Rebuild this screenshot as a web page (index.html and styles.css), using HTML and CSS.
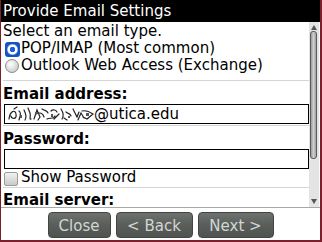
FILE: index.html
```html
<!DOCTYPE html>
<html>
<head>
<meta charset="utf-8">
<link rel="stylesheet" href="styles.css">
</head>
<body>
<div class="frame">
  <div class="title">Provide Email Settings</div>
  <div class="middle">
    <div class="content">
      <div class="section first">
        <div class="line">Select an email type.</div>
        <div class="option"><span class="radio on"></span>POP/IMAP (Most common)</div>
        <div class="option"><span class="radio"></span>Outlook Web Access (Exchange)</div>
      </div>
      <div class="section">
        <div class="label">Email address:</div>
        <div class="field">
          <svg class="scribble" width="87" height="16" viewBox="0 0 87 16">
            <g fill="none" stroke="#222" stroke-width="1.2" stroke-linecap="round">
              <path d="M2 13 C3 5 8 3 9 8 C10 13 5 14 4 10 M7 3 L10 1 M12 14 C13 10 15 7 12 5"/>
              <path d="M17 4 C19 8 20 11 18 14 M21 2 L23 7 C24 10 22 14 24 13"/>
              <path d="M27 13 L30 4 L33 11 L31 14 M29 8 C33 6 36 7 37 11 M35 3 C38 5 40 4 41 7"/>
              <path d="M40 13 C43 11 46 14 48 10 M44 5 C46 3 49 4 50 6 M47 13 L52 8"/>
              <path d="M54 3 C56 6 57 10 55 13 M57 12 L60 14 M59 6 C61 8 63 7 64 10"/>
              <path d="M66 3 L70 11 L72 6 M71 14 L74 7 L77 12 M75 5 C79 4 83 6 86 8 L80 13 L76 11"/>
            </g>
            <g fill="#555">
              <rect x="13" y="9" width="2" height="3"/>
              <rect x="28" y="6" width="3" height="2"/>
              <rect x="44" y="8" width="2" height="3"/>
              <rect x="61" y="10" width="2" height="2"/>
              <rect x="79" y="7" width="3" height="3"/>
            </g>
          </svg><span>@utica.edu</span>
        </div>
      </div>
      <div class="section">
        <div class="label">Password:</div>
        <div class="field"></div>
        <div class="option"><span class="checkbox"></span>Show Password</div>
      </div>
      <div class="section last">
        <div class="label">Email server:</div>
      </div>
    </div>
    <div class="scrollbar">
      <div class="arrow up"></div>
      <div class="track">
        <div class="thumb"></div>
      </div>
      <div class="arrow down"></div>
    </div>
  </div>
  <div class="buttons">
    <div class="btn btn-close">Close</div>
    <div class="btn btn-back">&lt; Back</div>
    <div class="btn btn-next">Next &gt;</div>
  </div>
</div>
</body>
</html>
```

FILE: styles.css
```css
* { box-sizing: border-box; }
html, body { margin: 0; padding: 0; background: #fff; }
body {
  width: 322px;
  height: 242px;
  overflow: hidden;
  font-family: "DejaVu Sans", sans-serif;
  font-size: 15px;
  color: #000;
}
.frame {
  width: 322px;
  height: 242px;
  border-left: 1px solid #7c1f2c;
  border-right: 2px solid #7c1f2c;
  border-bottom: 2px solid #7c1f2c;
  display: flex;
  flex-direction: column;
  background: #fff;
}
.title {
  height: 22px;
  background: #000;
  color: #fff;
  line-height: 22px;
  padding-left: 2px;
  white-space: nowrap;
}
.middle {
  height: 186px;
  display: flex;
  border-bottom: 1px solid #a8a8a8;
}
.content {
  flex: 1;
  overflow: hidden;
  padding-left: 2px;
}
.section {
  border-top: 1px solid #d4d4d4;
  padding: 5px 0 1px;
}
.section.first {
  border-top: none;
  padding: 1px 0 6px;
}
.section.last {
  padding-top: 4px;
}
.line, .option, .label {
  height: 17px;
  line-height: 17px;
  white-space: nowrap;
}
.option {
  display: flex;
  align-items: center;
}
.label {
  font-weight: bold;
  margin-bottom: 1px;
}
.radio {
  width: 14px;
  height: 14px;
  border-radius: 50%;
  margin: 1px 2px 0 2px;
  flex: none;
  border: 1px solid #8c8c8c;
  background: radial-gradient(circle at 40% 35%, #ffffff 0%, #e2e2e2 45%, #bdbdbd 100%);
}
.radio.on {
  width: 15px;
  height: 15px;
  margin: 1px 1px 0 2px;
  border: none;
  border-radius: 3px;
  background: radial-gradient(circle, #1d5fd6 0 2.5px, #ffffff 3px 4.6px, #7f9fd8 5.2px, #1552c8 6px);
}
.checkbox {
  width: 14px;
  height: 14px;
  margin: 2px 3px 0 1px;
  flex: none;
  border: 1px solid #9a9a9a;
  border-radius: 2px;
  background: linear-gradient(#f2f2f2, #c9c9c9);
}
.field {
  height: 20px;
  margin-left: 1px;
  border: 1px solid #000;
  display: flex;
  align-items: center;
  padding-left: 2px;
  line-height: 17px;
  white-space: nowrap;
}
.scribble { flex: none; }
.scrollbar {
  width: 10px;
  flex: none;
  margin-right: 1px;
  background: #e4e4e4;
  display: flex;
  flex-direction: column;
  align-items: center;
  padding: 2px 0;
}
.arrow {
  width: 0;
  height: 0;
  border-left: 3px solid transparent;
  border-right: 3px solid transparent;
  flex: none;
}
.arrow.up {
  border-bottom: 5px solid #555;
  margin-top: 1px;
}
.arrow.down {
  border-top: 5px solid #555;
  margin-bottom: 1px;
}
.track {
  flex: 1;
  width: 8px;
  padding-top: 1px;
}
.thumb {
  width: 7px;
  height: 128px;
  border: 1px solid #5a5a5a;
  border-radius: 3px;
  background: linear-gradient(90deg, #9a9a9a, #cfcfcf 50%, #a0a0a0);
}
.buttons {
  flex: 1;
  display: flex;
  justify-content: center;
  align-items: flex-start;
  gap: 5px;
  padding-top: 4px;
}
.btn {
  height: 26px;
  line-height: 26px;
  text-align: center;
  color: #d4d6d4;
  font-size: 15px;
  border-radius: 4px;
  background: linear-gradient(#6e726e, #5a5e5a 50%, #505450);
  border: 1px solid #444;
}
.btn-close { width: 63px; }
.btn-back { width: 77px; }
.btn-next { width: 76px; }
```
